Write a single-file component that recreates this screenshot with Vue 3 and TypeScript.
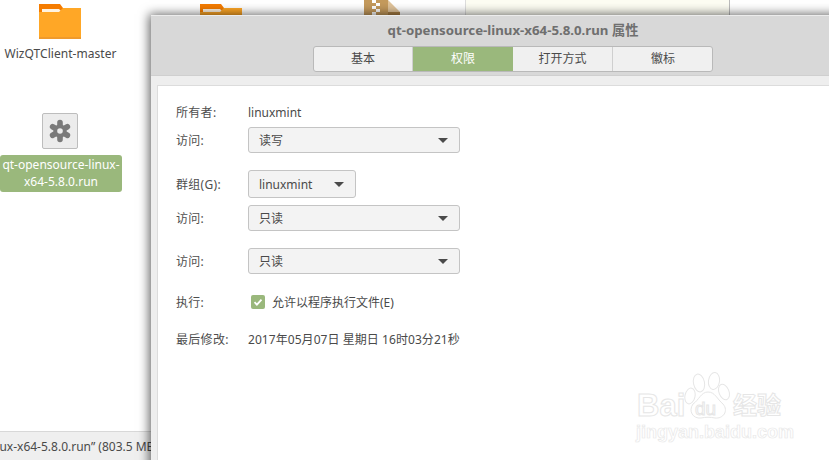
<script setup lang="ts">
const tabs = [
  { label: '基本', active: false },
  { label: '权限', active: true },
  { label: '打开方式', active: false },
  { label: '徽标', active: false },
]
</script>

<template>
  <div class="desk">
    <svg class="folder f1" viewBox="0 0 42 35" width="42" height="35"><path d="M0 0h21l3 4h18v31H0z" fill="#f57c00"/><path d="M3 5h17l3 3H3z" fill="#fff3e0"/><path d="M0 8h20l4-4h18v30a1 1 0 0 1-1 1H0z" fill="#ffa726"/><rect y="33" width="42" height="2" fill="#ef9a2c"/></svg>
    <div class="name n1">WizQTClient-master</div>
    <svg class="folder f2" viewBox="0 0 42 35" width="42" height="35"><path d="M0 0h21l3 4h18v31H0z" fill="#f57c00"/><path d="M3 5h17l3 3H3z" fill="#fff3e0"/><path d="M0 8h20l4-4h18v30H0z" fill="#ffa726"/></svg>
    <svg class="zip" viewBox="0 0 36 16" width="36" height="16"><rect width="24" height="16" fill="#c49a5c"/><path d="M8 0h4v3H8zM12 3h4v3h-4zM8 6h4v3H8zM12 9h4v3h-4zM8 12h4v3H8z" fill="#fff"/><path d="M24 0l12 12v4H24z" fill="#e0c39a"/><path d="M24 12h12v4H24z" fill="#a97f45"/></svg>
    <div class="note"></div>
    <div class="gear">
      <svg viewBox="0 0 24 24" width="24" height="24">
        <g stroke="#7a7a7a" stroke-width="5.6" stroke-linecap="round">
          <path d="M12 3.5v17M4.6 7.75l14.8 8.5M19.4 7.75l-14.8 8.5"/>
        </g>
        <circle cx="12" cy="12" r="6.6" fill="#7a7a7a"/>
        <circle cx="12" cy="12" r="2.8" fill="#ececec"/>
      </svg>
    </div>
    <div class="sel">qt-opensource-linux-<br />x64-5.8.0.run</div>
    <div class="status"><span>“qt-opensource-linux-x64-5.8.0.run” (803.5 MB)</span></div>

    <section class="win">
      <header class="head">
        <div class="title">qt-opensource-linux-x64-5.8.0.run 属性</div>
        <nav class="tabs">
          <div v-for="t in tabs" :key="t.label" class="tab" :class="{ on: t.active }">{{ t.label }}</div>
        </nav>
      </header>
      <div class="body">
        <div class="row r-owner"><label>所有者:</label><span>linuxmint</span></div>
        <div class="row r-a1"><label>访问:</label><div class="combo wide"><span>读写</span><i></i></div></div>
        <div class="row r-g"><label>群组(G):</label><div class="combo narrow"><span>linuxmint</span><i></i></div></div>
        <div class="row r-a2"><label>访问:</label><div class="combo wide"><span>只读</span><i></i></div></div>
        <div class="row r-a3"><label>访问:</label><div class="combo wide"><span>只读</span><i></i></div></div>
        <div class="row r-x"><label>执行:</label>
          <div class="check">
            <svg viewBox="0 0 14 14" width="14" height="14"><rect width="14" height="14" rx="2" fill="#9ab87c"/><path d="M3.5 7.2l2.4 2.4 4.6-5" fill="none" stroke="#fff" stroke-width="1.8"/></svg>
            <span>允许以程序执行文件(E)</span>
          </div>
        </div>
        <div class="row r-d"><label>最后修改:</label><span class="date">2017年05月07日 星期日 16时03分21秒</span></div>
      </div>
    </section>

    <div class="mark">
      <svg class="paw" viewBox="0 0 48 48" width="48" height="48"><g fill="#fff" stroke="#e6e6e6"><ellipse cx="15" cy="11" rx="5.5" ry="9" transform="rotate(-12 15 11)"/><ellipse cx="30" cy="9" rx="5.5" ry="8.5" transform="rotate(8 30 9)"/><ellipse cx="40" cy="20" rx="5" ry="8" transform="rotate(-22 40 20)"/><ellipse cx="6" cy="24" rx="5" ry="8" transform="rotate(12 6 24)"/><path d="M24 20c7 0 9 7 15 12 6 7 0 15-8 14-5-1-9-1-14 0-8 1-13-7-8-14 6-4 8-12 15-12z"/></g></svg>
      <span class="m-bai">Bai</span><span class="m-du">du</span><span class="m-cn">经验</span>
      <div class="m-url">jingyan.baidu.com</div>
    </div>
  </div>
</template>

<style>
html, body { margin: 0; background: #fff; overflow: hidden; }
</style>

<style scoped>
.desk { position: relative; width: 829px; height: 460px; overflow: hidden; background: #fff; font: 12px "Noto Sans", "Noto Sans CJK SC", sans-serif; color: #4a4a4a; }
.folder { position: absolute; top: 4px; }
.f1 { left: 39px; }
.f2 { left: 200px; }
.zip { position: absolute; left: 364px; top: 0; }
.note { position: absolute; left: 465px; top: -2px; width: 263px; height: 20px; background: #fdfdf3; border-left: 1px solid #ddd; border-right: 1px solid #bbb; }
.name { position: absolute; }
.n1 { left: 0; top: 45px; width: 121px; text-align: center; letter-spacing: .05px; }
.gear { position: absolute; left: 42px; top: 113px; width: 36px; height: 36px; box-sizing: border-box; background: #ececec; border: 1px solid #bdbdbd; border-radius: 2px; display: flex; align-items: center; justify-content: center; }
.sel { position: absolute; left: 0; top: 155px; width: 122px; height: 37px; border-radius: 3px; background: #9ab87c; color: #fff; text-align: center; line-height: 17px; padding-top: 1px; box-sizing: border-box; }
.status { position: absolute; left: 0; top: 431px; width: 151px; height: 29px; background: #efefef; border-top: 1px solid #d8d8d8; box-sizing: border-box; display: flex; justify-content: flex-end; overflow: hidden; white-space: nowrap; padding-top: 6px; }
.status span { margin-right: -7px; }
.win { position: absolute; left: 151px; top: 15px; width: 700px; height: 460px; background: #eee; box-shadow: -2px -1px 10px rgba(0,0,0,.6); display: flex; flex-direction: column; }
.head { height: 61px; background: #d8d8d8; border-top: 1px solid #ececec; border-bottom: 1px solid #cfcfcf; box-sizing: border-box; padding-top: 5px; }
.title { width: 724px; text-align: center; font-weight: 700; font-size: 13.25px; color: #6f6f6f; line-height: 18px; height: 18px; white-space: nowrap; }
.tabs { display: flex; width: 400px; height: 26px; margin: 7px 0 0 162px; box-sizing: border-box; border: 1px solid #b9b9b9; border-radius: 3px; background: #f0f0f0; overflow: hidden; }
.tab { width: 100px; flex: none; text-align: center; line-height: 24px; border-right: 1px solid #cfcfcf; box-sizing: border-box; }
.tab:first-child { width: 99px; }
.tab:last-child { border-right: 0; }
.tab.on { background: #9ab87c; color: #fff; border-right: 0; margin-top: -1px; margin-bottom: -1px; line-height: 26px; }
.body { margin: 9px 0 0 6px; flex: 1; background: #fff; border-top: 1px solid #dcdcdc; border-left: 1px solid #dcdcdc; position: relative; padding-left: 18px; }
.row { display: flex; align-items: center; }
.row label { width: 72px; flex: none; color: #4e4e4e; letter-spacing: .3px; }
.r-owner { margin-top: 17px; height: 18px; }
.r-a1 { margin-top: 6px; height: 26px; }
.r-g { margin-top: 17px; height: 28px; }
.r-a2 { margin-top: 7px; height: 26px; }
.r-a3 { margin-top: 17px; height: 26px; }
.r-x { margin-top: 18px; height: 20px; }
.r-d { margin-top: 18px; height: 18px; }
.date { letter-spacing: .06px; }
.combo { height: 100%; box-sizing: border-box; border: 1px solid #c4c4c4; border-radius: 3px; background: #f3f3f3; display: flex; align-items: center; justify-content: space-between; padding: 0 11px 0 10px; }
.wide { width: 212px; }
.narrow { width: 108px; }
.combo i { width: 0; height: 0; border-left: 5px solid transparent; border-right: 5px solid transparent; border-top: 5px solid #4a4a4a; }
.check { display: flex; align-items: center; gap: 7px; margin-left: 3px; }
.mark { position: absolute; left: 637px; top: 372px; width: 150px; height: 70px; }
.paw { position: absolute; left: 47px; top: 0; }
.mark span { position: absolute; color: #fff; -webkit-text-stroke: 1px #e6e6e6; font-family: "Liberation Sans", sans-serif; font-weight: 700; }
.m-bai { left: 0; top: 16px; font-size: 31px; }
.m-du { left: 58px; top: 26px; font-size: 19px; font-weight: 400 !important; }
.mark .m-cn { left: 96px; top: 14px; font-size: 24px; font-family: "Noto Sans CJK SC", sans-serif; }
.m-url { position: absolute; left: -1px; top: 50px; color: #fff; -webkit-text-stroke: .7px #e8e8e8; font: 700 18px "Liberation Sans", sans-serif; white-space: nowrap; }
</style>
